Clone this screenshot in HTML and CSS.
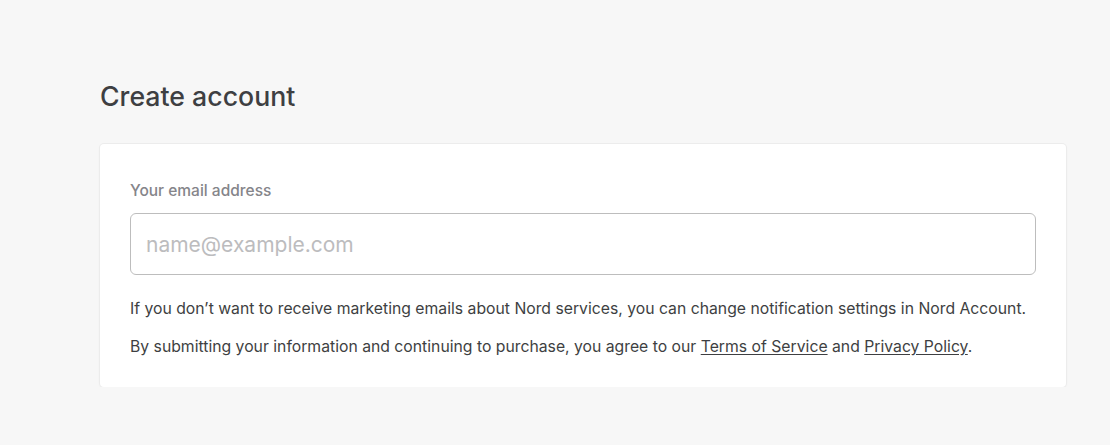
FILE: index.html
```
<!DOCTYPE html>
<html>
<head>
<meta charset="utf-8">
<link rel="stylesheet" href="styles.css">
</head>
<body>
<main class="page">
  <h1 class="title">Create account</h1>
  <section class="card">
    <label class="label" for="email">Your email address</label>
    <input class="input" id="email" type="email" placeholder="name@example.com">
    <p class="note">If you don’t want to receive marketing emails about Nord services, you can change notification settings in Nord Account.</p>
    <p class="note">By submitting your information and continuing to purchase, you agree to our <a href="#">Terms of Service</a> and <a href="#">Privacy Policy</a>.</p>
  </section>
</main>
</body>
</html>
```
FILE: styles.css
```
html, body {
  margin: 0;
  background: #f7f7f7;
}
body {
  font-family: Inter, "Liberation Sans", sans-serif;
  color: #3e3f42;
}
.page {
  padding: 78px 44px 0 100px;
  width: 966px;
}
.title {
  margin: 0 0 30px;
  font-size: 26.7px;
  font-weight: 500;
  line-height: 36px;
  color: #3e3f42;
}
.card {
  background: #fff;
  border-radius: 4px;
  box-shadow: 0 0 0 1px #ececec, 0 1px 3px rgba(0,0,0,0.06);
  padding: 38px 30px 26px;
  display: flex;
  flex-direction: column;
}
.label {
  font-size: 15.5px;
  font-weight: 500;
  color: #85858a;
  line-height: 18px;
  margin-bottom: 13px;
}
.input {
  box-sizing: border-box;
  height: 62px;
  border: 1px solid #bdbdbd;
  border-radius: 6px;
  padding: 0 15px;
  font-family: inherit;
  font-size: 21px;
  color: #3e3f42;
  margin: 0 0 20px;
  outline: none;
}
.input::placeholder {
  color: #bcbcbe;
}
.note {
  margin: 0;
  font-size: 15.75px;
  line-height: 20px;
  padding: 4px 0;
}
.note + .note {
  margin-top: 10px;
}
.note a {
  color: inherit;
  text-decoration: underline;
  text-underline-offset: 2px;
}
```
